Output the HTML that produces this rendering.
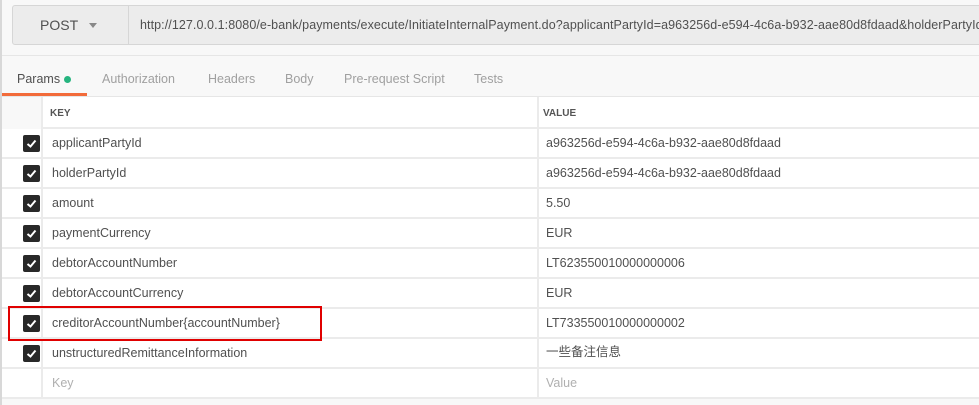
<!DOCTYPE html>
<html><head><meta charset="utf-8"><style>
*{margin:0;padding:0;box-sizing:border-box}
body{width:979px;height:405px;overflow:hidden;background:#f8f8f8;font-family:"Liberation Sans","Noto Sans CJK SC",sans-serif;position:relative;color:#505050}
.a{position:absolute}
.t{font-size:12.5px;color:#a0a0a0;top:72px}
.row{position:absolute;left:2px;right:0;height:30px;background:#fff;border-bottom:2px solid #ebebeb}
.cb{position:absolute;left:21px;top:6px;width:17px;height:17px;background:#282828;border-radius:2px}
.cb svg{position:absolute;left:2px;top:2px}
.k{position:absolute;left:50px;top:7px;font-size:12.5px;line-height:15px;color:#505050;white-space:nowrap}
.v{position:absolute;left:544px;top:7px;font-size:12.5px;line-height:15px;color:#505050;white-space:nowrap}
.d1{position:absolute;left:39px;top:0;bottom:0;width:2px;background:#ebebeb}
.d2{position:absolute;left:535px;top:0;bottom:0;width:2px;background:#ebebeb}
</style></head><body>
<div class="a" style="left:0;top:0;width:2px;height:405px;background:#d8d8d8"></div>
<div class="a" style="left:12px;top:5px;width:980px;height:40px;background:#ececec;border:1px solid #d6d6d6;border-radius:3px"></div>
<div class="a" style="left:128px;top:6px;width:1px;height:38px;background:#d6d6d6"></div>
<div class="a" style="left:40px;top:17px;font-size:14px;color:#505050">POST</div>
<div class="a" style="left:89px;top:23px;width:0;height:0;border-left:4px solid transparent;border-right:4px solid transparent;border-top:5px solid #888"></div>
<div class="a" style="left:140px;top:18px;font-size:12.5px;letter-spacing:0.08px;color:#505050;white-space:nowrap">http://127.0.0.1:8080/e-bank/payments/execute/InitiateInternalPayment.do?applicantPartyId=a963256d-e594-4c6a-b932-aae80d8fdaad&amp;holderPartyId</div>
<div class="a" style="left:2px;top:55px;width:977px;height:1px;background:#e6e6e6"></div>
<div class="a t" style="left:17px;color:#505050">Params</div>
<div class="a" style="left:64px;top:76px;width:7px;height:7px;border-radius:50%;background:#26b47f"></div>
<div class="a t" style="left:102px">Authorization</div>
<div class="a t" style="left:208px">Headers</div>
<div class="a t" style="left:285px">Body</div>
<div class="a t" style="left:344px">Pre-request Script</div>
<div class="a t" style="left:474px">Tests</div>
<div class="a" style="left:2px;top:93px;width:85px;height:3px;background:#f26b3a"></div>
<div class="a" style="left:2px;top:96px;width:977px;height:1px;background:#e6e6e6"></div>
<div class="row" style="top:97px;height:32px;background:#fff"><div class="d1" style="background:#ebebeb"></div><div class="d2"></div>
<div class="a" style="left:48px;top:11px;font-size:10px;font-weight:bold;color:#555">KEY</div>
<div class="a" style="left:541px;top:11px;font-size:10px;font-weight:bold;color:#555">VALUE</div></div>
<div class="a" style="left:2px;top:97px;width:39px;height:32px;background:#f8f8f8"></div>
<div class="row" style="top:129px"><div class="d1"></div><div class="d2"></div><div class="cb"><svg width="13" height="13"><path d="M2.5 7 L5.5 9.5 L10.5 3.5" stroke="#fff" stroke-width="2" fill="none"/></svg></div><div class="k">applicantPartyId</div><div class="v">a963256d-e594-4c6a-b932-aae80d8fdaad</div></div>
<div class="row" style="top:159px"><div class="d1"></div><div class="d2"></div><div class="cb"><svg width="13" height="13"><path d="M2.5 7 L5.5 9.5 L10.5 3.5" stroke="#fff" stroke-width="2" fill="none"/></svg></div><div class="k">holderPartyId</div><div class="v">a963256d-e594-4c6a-b932-aae80d8fdaad</div></div>
<div class="row" style="top:189px"><div class="d1"></div><div class="d2"></div><div class="cb"><svg width="13" height="13"><path d="M2.5 7 L5.5 9.5 L10.5 3.5" stroke="#fff" stroke-width="2" fill="none"/></svg></div><div class="k">amount</div><div class="v">5.50</div></div>
<div class="row" style="top:219px"><div class="d1"></div><div class="d2"></div><div class="cb"><svg width="13" height="13"><path d="M2.5 7 L5.5 9.5 L10.5 3.5" stroke="#fff" stroke-width="2" fill="none"/></svg></div><div class="k">paymentCurrency</div><div class="v">EUR</div></div>
<div class="row" style="top:249px"><div class="d1"></div><div class="d2"></div><div class="cb"><svg width="13" height="13"><path d="M2.5 7 L5.5 9.5 L10.5 3.5" stroke="#fff" stroke-width="2" fill="none"/></svg></div><div class="k">debtorAccountNumber</div><div class="v">LT623550010000000006</div></div>
<div class="row" style="top:279px"><div class="d1"></div><div class="d2"></div><div class="cb"><svg width="13" height="13"><path d="M2.5 7 L5.5 9.5 L10.5 3.5" stroke="#fff" stroke-width="2" fill="none"/></svg></div><div class="k">debtorAccountCurrency</div><div class="v">EUR</div></div>
<div class="row" style="top:309px"><div class="d1"></div><div class="d2"></div><div class="cb"><svg width="13" height="13"><path d="M2.5 7 L5.5 9.5 L10.5 3.5" stroke="#fff" stroke-width="2" fill="none"/></svg></div><div class="k">creditorAccountNumber{accountNumber}</div><div class="v">LT733550010000000002</div></div>
<div class="row" style="top:339px"><div class="d1"></div><div class="d2"></div><div class="cb"><svg width="13" height="13"><path d="M2.5 7 L5.5 9.5 L10.5 3.5" stroke="#fff" stroke-width="2" fill="none"/></svg></div><div class="k">unstructuredRemittanceInformation</div><div class="v" style="top:6px">一些备注信息</div></div>
<div class="row" style="top:369px"><div class="d1"></div><div class="d2"></div><div class="k" style="color:#b0b0b0">Key</div><div class="v" style="color:#b0b0b0">Value</div></div>
<div class="a" style="left:8px;top:306px;width:314px;height:35px;border:2px solid #e00000"></div>
</body></html>
